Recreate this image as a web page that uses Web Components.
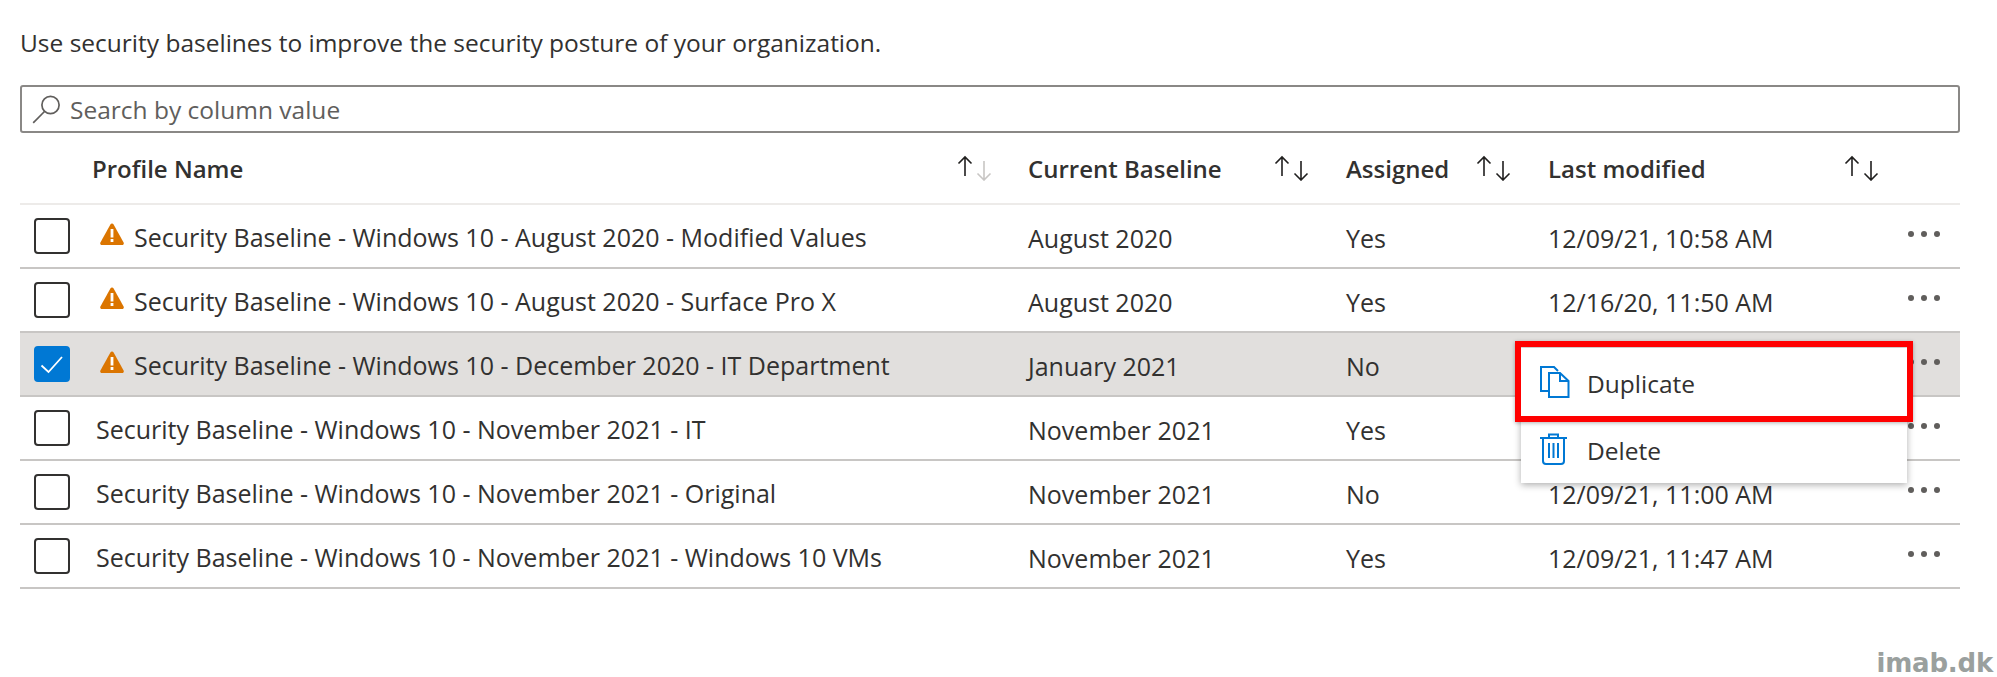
<!DOCTYPE html>
<html>
<head>
<meta charset="utf-8">
<title>Security baselines</title>
<style>
    html, body { margin: 0; background: #fff; }
    body { font-family: "Open Sans", "Noto Sans", sans-serif; color: #323130; font-size: 24.5px; overflow: hidden; }
</style>
</head>
<body>
<sb-page>
    <sb-intro>Use security baselines to improve the security posture of your organization.</sb-intro>
    <sb-search>Search by column value</sb-search>
    <sb-head>
        <sb-th pad="35" first-gray>Profile Name</sb-th>
        <sb-th pad="36">Current Baseline</sb-th>
        <sb-th pad="36">Assigned</sb-th>
        <sb-th pad="80">Last modified</sb-th>
    </sb-head>
    <sb-row warn>
        <span slot="name">Security Baseline - Windows 10 - August 2020 - Modified Values</span>
        <span slot="base">August 2020</span><span slot="assigned">Yes</span><span slot="modified">12/09/21, 10:58 AM</span>
    </sb-row>
    <sb-row warn>
        <span slot="name">Security Baseline - Windows 10 - August 2020 - Surface Pro X</span>
        <span slot="base">August 2020</span><span slot="assigned">Yes</span><span slot="modified">12/16/20, 11:50 AM</span>
    </sb-row>
    <sb-row warn checked>
        <span slot="name">Security Baseline - Windows 10 - December 2020 - IT Department</span>
        <span slot="base">January 2021</span><span slot="assigned">No</span>
    </sb-row>
    <sb-row>
        <span slot="name">Security Baseline - Windows 10 - November 2021 - IT</span>
        <span slot="base">November 2021</span><span slot="assigned">Yes</span>
    </sb-row>
    <sb-row>
        <span slot="name">Security Baseline - Windows 10 - November 2021 - Original</span>
        <span slot="base">November 2021</span><span slot="assigned">No</span><span slot="modified">12/09/21, 11:00 AM</span>
    </sb-row>
    <sb-row>
        <span slot="name">Security Baseline - Windows 10 - November 2021 - Windows 10 VMs</span>
        <span slot="base">November 2021</span><span slot="assigned">Yes</span><span slot="modified">12/09/21, 11:47 AM</span>
    </sb-row>
    <sb-menu>
        <sb-menu-item icon="copy" marked>Duplicate</sb-menu-item>
        <sb-menu-item icon="trash">Delete</sb-menu-item>
    </sb-menu>
    <sb-mark>imab.dk</sb-mark>
</sb-page>

<script>
    // small helper so every element gets an open shadow root from a string
    function shadow(el, html) {
        el.attachShadow({mode: 'open'}).innerHTML = html;
    }

    class SbPage extends HTMLElement {
        constructor() {
            super();
            shadow(this, `<style>
                :host { display: block; position: relative; width: 1997px; height: 677px; box-sizing: border-box; padding: 0 37px 0 20px; }
            </style><slot></slot>`);
        }
    }

    class SbIntro extends HTMLElement {
        constructor() {
            super();
            shadow(this, `<style>
                :host { display: block; height: 85px; box-sizing: border-box; padding-top: 26px; line-height: 34px; }
            </style><slot></slot>`);
        }
    }

    class SbSearch extends HTMLElement {
        constructor() {
            super();
            shadow(this, `<style>
                :host { display: flex; align-items: center; gap: 9px; height: 48px; box-sizing: border-box; border: 2px solid #8a8886; border-radius: 3px; padding-left: 10px; color: #605e5c; }
                svg { flex: none; display: block; }
            </style>
            <svg width="29" height="29" viewBox="0 0 29 29" fill="none" stroke="#605e5c" stroke-width="1.7">
                <circle cx="18.5" cy="10" r="8.6"/>
                <path d="M12.5 16.5 L1.2 27.8"/>
            </svg>
            <slot></slot>`);
        }
    }

    class SbHead extends HTMLElement {
        constructor() {
            super();
            shadow(this, `<style>
                :host { display: grid; grid-template-columns: 72px 936px 318px 202px 1fr; height: 72px; box-sizing: border-box; border-bottom: 2px solid #edebe9; font-weight: 600; font-size: 24px; align-items: center; }
                ::slotted(:first-child) { grid-column: 2; }
            </style><slot></slot>`);
        }
    }

    class SbTh extends HTMLElement {
        constructor() {
            super();
            const down = this.hasAttribute('first-gray') ? '#c8c6c4' : '#201f1e';
            shadow(this, `<style>
                :host { display: flex; align-items: center; justify-content: space-between; padding-right: ${this.getAttribute('pad')}px; }
                svg { display: block; flex: none; }
            </style>
            <slot></slot>
            <svg width="36" height="26" viewBox="0 0 36 26" fill="none" stroke-width="1.6">
                <path d="M8 21V2 M1.500 8.500 L8 2 L14.500 8.500" stroke="#201f1e"/>
                <path d="M27 6V25 M20.500 18.500 L27 25 L33.500 18.500" stroke="${down}"/>
            </svg>`);
        }
    }

    class SbCheckbox extends HTMLElement {
        constructor() {
            super();
            shadow(this, `<style>
                :host { display: block; width: 36px; height: 36px; box-sizing: border-box; border: 2px solid #323130; border-radius: 4px; }
                :host([checked]) { background: #0078d4; border-color: #0078d4; }
                svg { display: block; }
            </style>
            ${this.hasAttribute('checked') ? `<svg width="32" height="32" viewBox="0 0 32 32" fill="none" stroke="#fff" stroke-width="1.8"><path d="M5.500 17.500 L12.500 24 L26 9"/></svg>` : ''}`);
        }
    }

    class SbRow extends HTMLElement {
        constructor() {
            super();
            const warn = this.hasAttribute('warn');
            const checked = this.hasAttribute('checked');
            shadow(this, `<style>
                :host { display: grid; grid-template-columns: 76px 932px 318px 202px 1fr; height: 64px; box-sizing: border-box; border-bottom: 2px solid #c8c6c4; align-items: center; font-size: 25px; }
                :host([checked]) { background: #e1dfdd; }
                .check { padding-left: 14px; }
                .name { display: flex; align-items: center; gap: 10px; white-space: nowrap; }
                .label { padding-top: 1px; }
                .warn { margin-left: 4px; margin-top: -5px; flex: none; display: block; }
                .cell { padding-top: 3px; white-space: nowrap; }
                .last { display: flex; justify-content: space-between; align-items: center; padding-right: 20px; min-height: 36px; }
                .dots { display: block; flex: none; margin-top: -5px; }
            </style>
            <div class="check"><sb-checkbox ${checked ? 'checked' : ''}></sb-checkbox></div>
            <div class="name">
                ${warn ? `<svg class="warn" width="24" height="22" viewBox="0 0 24 22"><path d="M12 0.5 C12.7 0.5 13.2 0.9 13.6 1.6 L23.6 19.6 C24.2 20.8 23.5 22 22.2 22 H1.8 C0.5 22 -0.2 20.8 0.4 19.6 L10.4 1.6 C10.8 0.9 11.3 0.5 12 0.5Z" fill="#db7500"/><rect x="10.6" y="6" width="2.8" height="8.5" fill="#fff"/><rect x="10.6" y="16" width="2.8" height="3" fill="#fff"/></svg>` : ''}
                <div class="label"><slot name="name"></slot></div>
            </div>
            <div class="cell"><slot name="base"></slot></div>
            <div class="cell"><slot name="assigned"></slot></div>
            <div class="last">
                <div class="cell"><slot name="modified"></slot></div>
                <svg class="dots" width="32" height="6" viewBox="0 0 32 6" fill="#605e5c"><circle cx="3" cy="3" r="3"/><circle cx="16" cy="3" r="3"/><circle cx="29" cy="3" r="3"/></svg>
            </div>`);
        }
    }

    class SbMenu extends HTMLElement {
        constructor() {
            super();
            shadow(this, `<style>
                :host { display: block; position: absolute; left: 1521px; top: 348px; width: 386px; height: 135px; background: #fff; box-shadow: 0 2px 7px rgba(0,0,0,.32); }
            </style><slot></slot>`);
        }
    }

    const MENU_ICONS = {
        copy: `<svg width="30" height="32" viewBox="0 0 30 32" fill="none" stroke="#0078d4" stroke-width="2"><path d="M9 25H1V1H14L18 5"/><path d="M9 7H20L28.5 15V31H9Z"/><path d="M20 7V15H28.5"/></svg>`,
        trash: `<svg width="28" height="32" viewBox="0 0 28 32" fill="none" stroke="#0078d4" stroke-width="2"><path d="M0 5H27"/><path d="M9 5V1.5H18V5"/><path d="M3 5V28C3 30 4 31 6 31H21C23 31 24 30 24 28V5"/><path d="M9 10V25 M13.500 10V25 M18 10V25"/></svg>`
    };

    class SbMenuItem extends HTMLElement {
        constructor() {
            super();
            shadow(this, `<style>
                :host { display: flex; align-items: center; height: 67px; padding-left: 19px; position: relative; font-size: 24.5px; box-sizing: border-box; }
                .ico { width: 47px; flex: none; display: flex; }
                svg { display: block; }
                .text { padding-top: 4px; }
                .mark { position: absolute; left: -6px; top: -7px; right: -6px; height: 81px; box-sizing: border-box; border: 6px solid #f00; box-shadow: 0 1px 4px rgba(0,0,0,.3); }
            </style>
            <div class="ico">${MENU_ICONS[this.getAttribute('icon')]}</div>
            <div class="text"><slot></slot></div>
            ${this.hasAttribute('marked') ? '<div class="mark"></div>' : ''}`);
        }
    }

    class SbMark extends HTMLElement {
        constructor() {
            super();
            shadow(this, `<style>
                :host { display: block; position: absolute; right: 4px; bottom: -1px; font: bold 26px/30px "DejaVu Sans", sans-serif; letter-spacing: -0.2px; color: #9aa09e; }
            </style><slot></slot>`);
        }
    }

    customElements.define('sb-page', SbPage);
    customElements.define('sb-intro', SbIntro);
    customElements.define('sb-search', SbSearch);
    customElements.define('sb-head', SbHead);
    customElements.define('sb-th', SbTh);
    customElements.define('sb-checkbox', SbCheckbox);
    customElements.define('sb-row', SbRow);
    customElements.define('sb-menu', SbMenu);
    customElements.define('sb-menu-item', SbMenuItem);
    customElements.define('sb-mark', SbMark);
</script>
</body>
</html>
